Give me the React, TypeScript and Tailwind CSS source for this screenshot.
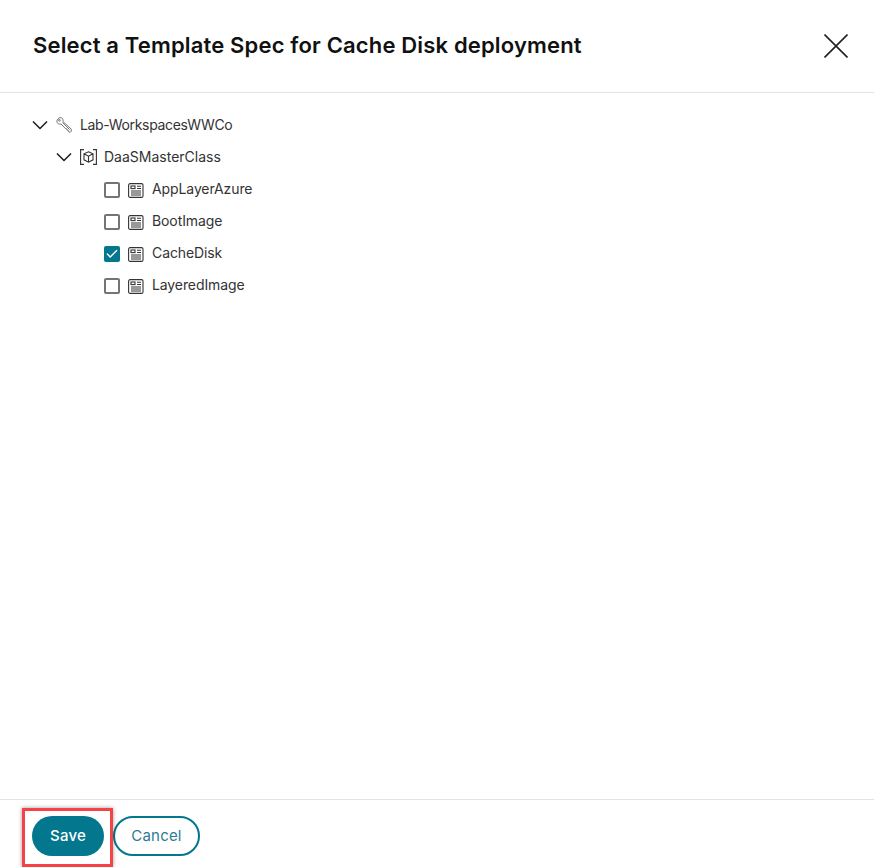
import { Check } from "lucide-react";

const font = { fontFamily: "Inter, 'Noto Sans', sans-serif" };

function Chevron() {
  return (
    <svg width="16" height="10" viewBox="0 0 16 10" fill="none" stroke="#1a1a1a" strokeWidth="1.5" className="shrink-0">
      <path d="M1 1.5 8 8.5 15 1.5" />
    </svg>
  );
}

function KeyIcon() {
  return (
    <svg width="16" height="16" viewBox="0 0 16 16" fill="none" stroke="#666" strokeWidth="0.9" className="shrink-0">
      <path d="M1.6 2.2 3 .9C4.2.3 5.6.6 6.400 1.500 7.200 2.400 7.300 3.600 6.900 4.500L15.300 12.200V14.200L14.200 15.300 12.800 15 12.400 13.500 11 13.200 10.700 11.800 9.300 11.400 5 7C3.800 7.400 2.500 7.100 1.600 6.200.700 5.200.600 3.400 1.600 2.200Z" />
      <circle cx="3.400" cy="3.300" r="0.900" />
      <path d="M6.500 5.500 13.500 12.500" />
    </svg>
  );
}

function CubeIcon() {
  return (
    <svg width="17" height="16" viewBox="0 0 17 16" fill="none" stroke="#333" strokeWidth="1.1" className="shrink-0">
      <path d="M4 .6H.6V15.400H4M13 .6H16.400V15.400H13" />
      <path d="M8.500 2.800 13 4.800V10.800L8.500 13.200 4 10.800V4.800ZM4 4.800 8.500 7.200 13 4.800M8.500 7.200V13.200" />
    </svg>
  );
}

function SpecIcon() {
  return (
    <svg width="16" height="15" viewBox="0 0 16 15" fill="none" stroke="#333" strokeWidth="1.1" className="shrink-0">
      <rect x="0.6" y="0.6" width="14.400" height="13.800" rx="1.500" />
      <rect x="3" y="3" width="4" height="2.600" />
      <path d="M9 3.300H13M9 5.500H13M3 8H13M3 10H13M3 12H13" />
    </svg>
  );
}

function Leaf({ label, checked }: { label: string; checked?: boolean }) {
  return (
    <div className="flex h-8 items-center pl-[104px]">
      {checked ? (
        <span className="mt-[2px] flex h-4 w-4 items-center justify-center rounded-[2px] bg-[#02778e]">
          <Check className="h-[14px] w-[14px] text-white" strokeWidth={2.4} />
        </span>
      ) : (
        <span className="mt-[2px] h-4 w-4 rounded-[2px] border-2 border-[#757575] bg-white" />
      )}
      <span className="ml-2 mt-[2px] flex w-4 justify-center">
        <SpecIcon />
      </span>
      <span className="mb-[1px] ml-2 text-[14px] tracking-[-0.1px] text-[#333]">{label}</span>
    </div>
  );
}

export default function App() {
  return (
    <div className="flex h-[867px] w-[874px] flex-col overflow-hidden bg-white" style={font}>
      <header className="flex h-[93px] shrink-0 items-center justify-between border-b border-[#e3e3e3] pl-[33px] pr-[26px]">
        <h1 className="mb-[2px] text-[22px] font-semibold tracking-[0.16px] text-[#111]">
          Select a Template Spec for Cache Disk deployment
        </h1>
        <svg width="24" height="24" viewBox="0 0 24 24" stroke="#222" strokeWidth="1.6" fill="none">
          <path d="M.5.5 23.500 23.500M23.500.5.5 23.500" />
        </svg>
      </header>

      <main className="flex-1 pt-4">
        <div className="flex h-8 items-center pl-[32px]">
          <Chevron />
          <span className="ml-2 flex w-4 justify-center">
            <KeyIcon />
          </span>
          <span className="mb-[1px] ml-2 text-[14px] tracking-[-0.33px] text-[#333]">Lab-WorkspacesWWCo</span>
        </div>
        <div className="flex h-8 items-center pl-[56px]">
          <Chevron />
          <span className="ml-2 flex w-4 justify-center">
            <CubeIcon />
          </span>
          <span className="mb-[1px] ml-2 text-[14px] text-[#333]">DaaSMasterClass</span>
        </div>
        <Leaf label="AppLayerAzure" />
        <Leaf label="BootImage" />
        <Leaf label="CacheDisk" checked />
        <Leaf label="LayeredImage" />
      </main>

      <footer className="relative flex h-[68px] shrink-0 items-start gap-[9px] border-t border-[#e3e3e3] pl-[32px] pt-4">
        <button className="h-10 w-[72px] rounded-full bg-[#02778e] text-[15px] font-medium tracking-[0.2px] text-white">
          Save
        </button>
        <button className="h-10 w-[87px] rounded-full border-2 border-[#02778e] bg-white text-[15px] tracking-[0.2px] text-[#2f7b90]">
          Cancel
        </button>
        <div className="absolute left-[22px] top-[8px] h-[59px] w-[91px] border-[3px] border-[#f44347] shadow-[0_0_4px_rgba(0,0,0,0.4)]" />
      </footer>
    </div>
  );
}
